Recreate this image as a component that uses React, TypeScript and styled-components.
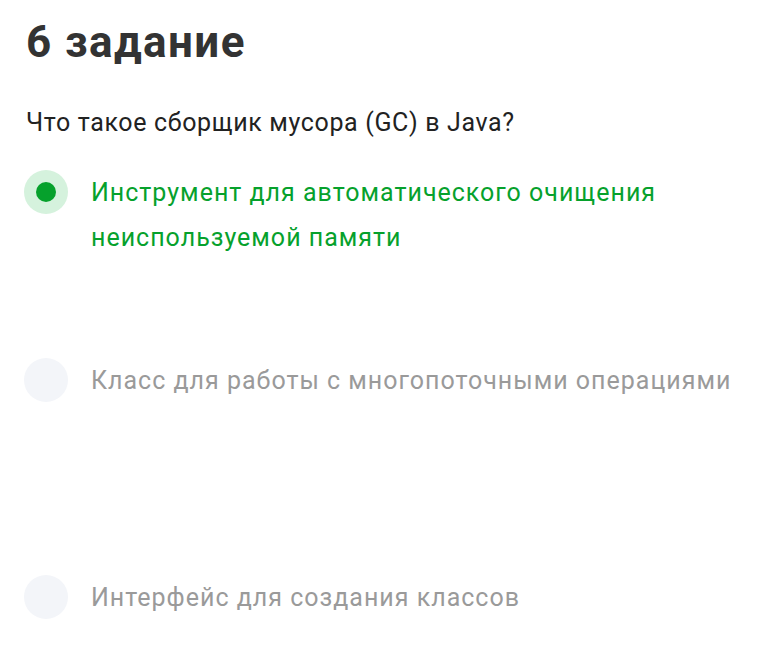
import * as React from "react";
import styled, { createGlobalStyle } from "styled-components";

const GlobalStyle = createGlobalStyle`
  body {
    margin: 0;
    background: #ffffff;
    font-family: Roboto, "Noto Sans", Arial, sans-serif;
  }
`;

const Page = styled.div`
  padding: 14px 24px 0 26px;
  width: 760px;
  box-sizing: border-box;
`;

const Title = styled.h1`
  margin: 0;
  font-size: 44px;
  line-height: 56px;
  font-weight: 700;
  letter-spacing: 1.4px;
  color: #333333;
`;

const Question = styled.p`
  margin: 38px 0 0;
  font-size: 25px;
  line-height: 30px;
  letter-spacing: 0.65px;
  color: #222222;
`;

const Options = styled.div`
  display: flex;
  flex-direction: column;
  margin-top: 32px;
  margin-left: -2px;
`;

const Option = styled.label<{ $gap: number }>`
  display: flex;
  align-items: flex-start;
  gap: 23px;
  margin-bottom: ${(p) => p.$gap}px;
  cursor: pointer;
`;

const Radio = styled.span<{ $checked: boolean }>`
  flex: 0 0 44px;
  height: 44px;
  border-radius: 50%;
  display: flex;
  align-items: center;
  justify-content: center;
  background: ${(p) => (p.$checked ? "#d5f2dd" : "#f3f5f9")};

  &::after {
    content: "";
    display: ${(p) => (p.$checked ? "block" : "none")};
    width: 20px;
    height: 20px;
    border-radius: 50%;
    background: #06a12c;
  }
`;

const OptionText = styled.span<{ $checked: boolean }>`
  font-size: 25px;
  line-height: 45px;
  letter-spacing: 1px;
  color: ${(p) => (p.$checked ? "#06a12c" : "#9a9a9a")};
`;

const answers = [
  { text: "Инструмент для автоматического очищения неиспользуемой памяти", checked: true, gap: 98 },
  { text: "Класс для работы с многопоточными операциями", checked: false, gap: 172 },
  { text: "Интерфейс для создания классов", checked: false, gap: 0 },
];

export default function App() {
  return (
    <Page>
      <GlobalStyle />
      <Title>6 задание</Title>
      <Question>Что такое сборщик мусора (GC) в Java?</Question>
      <Options>
        {answers.map((a) => (
          <Option key={a.text} $gap={a.gap}>
            <Radio $checked={a.checked} />
            <OptionText $checked={a.checked}>{a.text}</OptionText>
          </Option>
        ))}
      </Options>
    </Page>
  );
}
